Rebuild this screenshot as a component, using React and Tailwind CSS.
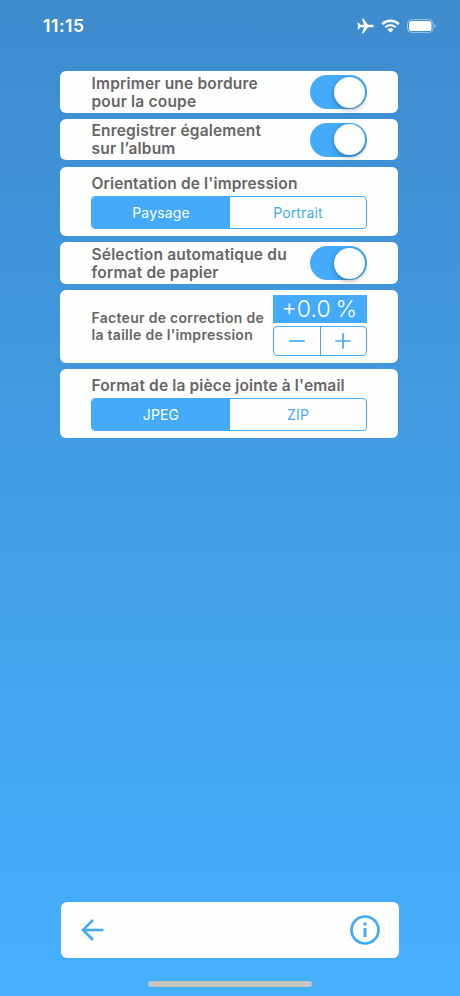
import React, { useState } from 'react';

const Card = ({ className = "", children }) => (
  <section className={`w-[337.5px] rounded-[6px] bg-[#fefefe] pr-[31px] pl-[31.5px] ${className}`}>
    {children}
  </section>
);

const Switch = ({ label }) => {
  const [on, setOn] = useState(true);

  return (
    <button
      type="button"
      role="switch"
      aria-checked={on}
      aria-label={label}
      onClick={() => setOn(!on)}
      className={`flex h-[34px] w-[57px] shrink-0 items-center rounded-full px-[2px] ${on ? "justify-end bg-[#44aafb]" : "justify-start bg-gray-200"}`}
    >
      <span className="size-[31px] rounded-full bg-white shadow-[0_2px_5px_rgba(0,0,0,0.3)]" />
    </button>
  );
};

const SwitchRow = ({ lines, className }) => (
  <Card className={`flex items-center justify-between ${className}`}>
    <p className="pt-px text-[15.5px] leading-[18px] font-semibold tracking-[0.19px] whitespace-nowrap">
      {lines[0]}
      <br />
      {lines[1]}
    </p>
    <Switch label={lines.join(" ")} />
  </Card>
);

const SegmentRow = ({ title, options, className }) => {
  const [selected, setSelected] = useState(0);

  return (
    <Card className={`h-[69px] pt-[8px] ${className}`}>
      <h2 className="text-[15.5px] leading-[18px] font-semibold tracking-[0.14px] whitespace-nowrap">{title}</h2>
      <div className="mt-[3px] -ml-[0.5px] flex h-[33px] w-[276px] overflow-hidden rounded-[4px] border border-[#44aafb]">
        {options.map((option, i) => (
          <button
            key={option}
            type="button"
            onClick={() => setSelected(i)}
            className={`text-[14px] tracking-[0.15px] first:w-[138px] last:flex-1 ${i === selected ? "bg-[#44aafb] text-white" : "text-[#44aafb]"}`}
          >
            {option}
          </button>
        ))}
      </div>
    </Card>
  );
};

const StatusBar = () => (
  <header className="flex h-[51px] items-center pr-[24px] pl-[43px] text-white">
    <time className="text-[17.5px] leading-none font-semibold tracking-[0.55px]">11:15</time>
    <div className="ml-auto flex items-center">
      <svg className="mr-[7px]" width="17" height="16" viewBox="0 0 17 16" fill="currentColor">
        <path d="M16.8 8c0-.8-.8-1.2-1.8-1.2h-4L6.6.7H4.9l2.2 6.1H3.4L1.8 4.7H.4L1.2 8l-.8 3.3h1.4l1.6-2.1h3.7l-2.2 6.1h1.7L11 9.2h4c1 0 1.8-.4 1.8-1.2z" />
      </svg>
      <svg className="mr-[7px]" width="19" height="14" viewBox="0 0 19 14" fill="none" stroke="currentColor">
        <path d="M1.2 5.2a11.8 11.8 0 0 1 16.6 0" strokeWidth="2.5" />
        <path d="M4.2 8.3a7.5 7.5 0 0 1 10.6 0" strokeWidth="2.3" />
        <path d="M9.5 13.6 6.5 10.7a4.3 4.3 0 0 1 6 0z" fill="currentColor" stroke="none" />
      </svg>
      <svg width="29" height="14" viewBox="0 0 29 14">
        <rect x=".5" y=".5" width="25.5" height="13" rx="4" fill="none" stroke="white" strokeOpacity=".45" />
        <rect x="2" y="2" width="22.5" height="10" rx="2.6" fill="white" />
        <path d="M27.3 4.8c1.8.7 1.8 3.7 0 4.4z" fill="white" fillOpacity=".5" />
      </svg>
    </div>
  </header>
);

const Stepper = () => {
  const [value, setValue] = useState(0);
  const text = `${value < 0 ? "-" : "+"}${Math.abs(value).toFixed(1)}`;

  return (
    <div className="w-[94px] shrink-0">
      <output className="flex h-[28px] items-center justify-center bg-[#44aafb] text-[23px] leading-none font-light whitespace-pre text-white">
        {text}
        <span className="ml-[5px]">%</span>
      </output>
      <div className="mt-[3px] flex h-[30px] rounded-[4px] border border-[#44aafb] text-[#44aafb]">
        <button
          type="button"
          aria-label="−"
          onClick={() => setValue(value - 0.1)}
          className="flex w-[47px] items-center justify-center border-r border-[#44aafb]"
        >
          <svg width="16" height="16" viewBox="0 0 16 16" stroke="currentColor" strokeWidth="1.7">
            <path d="M.3 8h15.4" />
          </svg>
        </button>
        <button
          type="button"
          aria-label="+"
          onClick={() => setValue(value + 0.1)}
          className="flex flex-1 items-center justify-center"
        >
          <svg width="16" height="16" viewBox="0 0 16 16" stroke="currentColor" strokeWidth="1.7">
            <path d="M.3 8h15.4M8 .3v15.4" />
          </svg>
        </button>
      </div>
    </div>
  );
};

const App = () => {
  return (
    <div className="flex h-[996px] w-[460px] flex-col overflow-hidden bg-linear-to-b from-[#3e8bcd] to-[#46b0ff] font-['Inter',sans-serif] text-[#666]">
      <StatusBar />

      <main className="mt-[20px] ml-[60px] flex flex-col">
        <SwitchRow className="h-[42px]" lines={["Imprimer une bordure", "pour la coupe"]} />
        <SwitchRow className="mt-[6px] h-[41px]" lines={["Enregistrer également", "sur l’album"]} />
        <SegmentRow className="mt-[7px]" title="Orientation de l'impression" options={["Paysage", "Portrait"]} />
        <SwitchRow className="mt-[6px] h-[42px]" lines={["Sélection automatique du", "format de papier"]} />
        <Card className="mt-[6px] flex h-[73px] items-start justify-between pt-[5px]">
          <p className="mt-[14px] text-[14px] leading-[17px] font-semibold tracking-[0.28px] whitespace-nowrap">
            Facteur de correction de
            <br />
            la taille de l'impression
          </p>
          <Stepper />
        </Card>
        <SegmentRow className="mt-[6px]" title="Format de la pièce jointe à l'email" options={["JPEG", "ZIP"]} />
      </main>

      <nav className="mt-auto ml-[61px] flex h-[56px] w-[338px] shrink-0 items-center justify-between rounded-[6px] bg-[#fefefe] pr-[19px] pl-[20px] text-[#44aaf8]">
        <button type="button" aria-label="Retour">
          <svg width="23" height="22" viewBox="0 0 23 22" fill="none" stroke="currentColor" strokeWidth="2.6">
            <path d="M22.5 11H2.5M12 1 2 11l10 10" />
          </svg>
        </button>
        <button type="button" aria-label="Informations">
          <svg width="30" height="30" viewBox="0 0 30 30" fill="none" stroke="currentColor">
            <circle cx="15" cy="15" r="13.5" strokeWidth="2.7" />
            <path d="M15 7.5v3M15 13v9" strokeWidth="3" />
          </svg>
        </button>
      </nav>
      <div className="mt-[23px] mb-[9px] ml-[148px] h-[6px] w-[164px] shrink-0 rounded-full bg-[#c3c5c2]" />
    </div>
  );
};

export default App;
